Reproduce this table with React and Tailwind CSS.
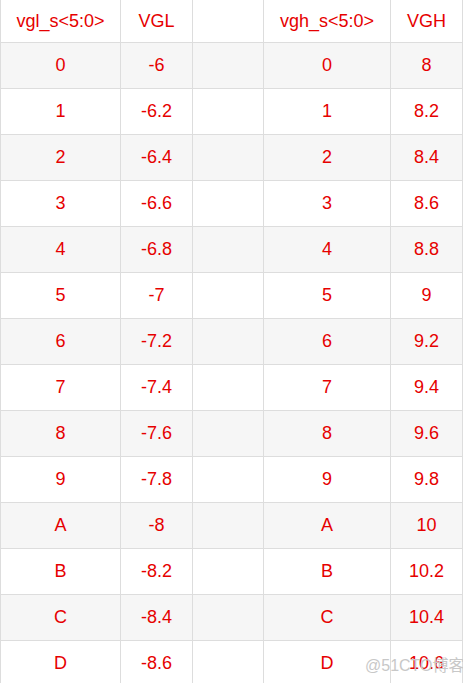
import React from 'react';

const rows = [
  ['0', '-6', '0', '8'],
  ['1', '-6.2', '1', '8.2'],
  ['2', '-6.4', '2', '8.4'],
  ['3', '-6.6', '3', '8.6'],
  ['4', '-6.8', '4', '8.8'],
  ['5', '-7', '5', '9'],
  ['6', '-7.2', '6', '9.2'],
  ['7', '-7.4', '7', '9.4'],
  ['8', '-7.6', '8', '9.6'],
  ['9', '-7.8', '9', '9.8'],
  ['A', '-8', 'A', '10'],
  ['B', '-8.2', 'B', '10.2'],
  ['C', '-8.4', 'C', '10.4'],
  ['D', '-8.6', 'D', '10.6'],
];

function Row({ cells, striped, header }) {
  const h = header ? 'h-[43px]' : 'h-[46px]';
  const bg = striped ? 'bg-[#f6f6f6]' : 'bg-white';
  return (
    <div className={`grid grid-cols-[120px_72px_71px_127px_72px] ${h} ${bg}`}>
      {cells.map((c, i) => (
        <div
          key={i}
          className="flex items-center justify-center border-r border-b border-[#dddddd] text-[18px] text-[#e60000]"
        >
          {c}
        </div>
      ))}
    </div>
  );
}

export default function App() {
  return (
    <div className="relative h-[683px] w-[463px] overflow-hidden bg-white font-['Liberation_Sans',Arial,sans-serif]">
      <div className="border-l border-[#dddddd]">
        <Row header cells={['vgl_s<5:0>', 'VGL', '', 'vgh_s<5:0>', 'VGH']} />
        {rows.map((r, i) => (
          <Row key={i} striped={i % 2 === 0} cells={[r[0], r[1], '', r[2], r[3]]} />
        ))}
      </div>
      <div className="absolute left-[365px] top-[658px] whitespace-nowrap text-[16px] leading-none text-[#c8c8c8] font-['Liberation_Sans','Noto_Sans_CJK_SC',sans-serif]">
        @51CTO博客
      </div>
    </div>
  );
}
